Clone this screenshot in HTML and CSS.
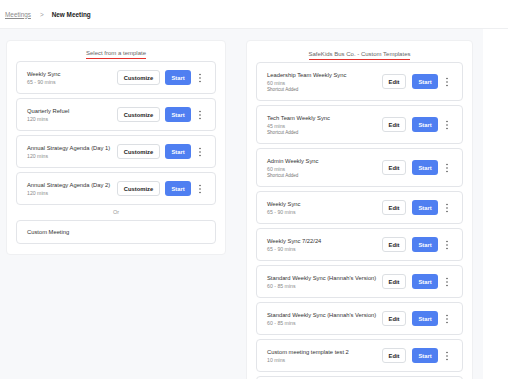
FILE: index.html
```html
<!DOCTYPE html>
<html lang="en">
<head>
  <meta charset="UTF-8">
  <meta name="viewport" content="width=device-width, initial-scale=1.0">
  <title>New Meeting</title>
  <link rel="stylesheet" href="styles.css">
</head>
<body>
  <header class="topbar">
    <a href="#" class="crumb">Meetings</a>
    <span class="crumb-sep">&gt;</span>
    <span class="crumb-current">New Meeting</span>
  </header>

  <main class="main">
    <!-- Templates padrão -->
    <section class="card card-left">
      <div class="card-title"><span>Select from a template</span></div>
      <div class="lista">
        <div class="item">
          <div class="info">
            <div class="nome">Weekly Sync</div>
            <div class="dur">65 - 90 mins</div>
          </div>
          <button class="btn btn-sec btn-customize">Customize</button>
          <button class="btn btn-start">Start</button>
          <svg class="dots" width="4" height="10" viewBox="0 0 4 10"><circle cx="2" cy="1.6" r="0.75"/><circle cx="2" cy="5" r="0.75"/><circle cx="2" cy="8.4" r="0.75"/></svg>
        </div>
        <div class="item">
          <div class="info">
            <div class="nome">Quarterly Refuel</div>
            <div class="dur">120 mins</div>
          </div>
          <button class="btn btn-sec btn-customize">Customize</button>
          <button class="btn btn-start">Start</button>
          <svg class="dots" width="4" height="10" viewBox="0 0 4 10"><circle cx="2" cy="1.6" r="0.75"/><circle cx="2" cy="5" r="0.75"/><circle cx="2" cy="8.4" r="0.75"/></svg>
        </div>
        <div class="item">
          <div class="info">
            <div class="nome">Annual Strategy Agenda (Day 1)</div>
            <div class="dur">120 mins</div>
          </div>
          <button class="btn btn-sec btn-customize">Customize</button>
          <button class="btn btn-start">Start</button>
          <svg class="dots" width="4" height="10" viewBox="0 0 4 10"><circle cx="2" cy="1.6" r="0.75"/><circle cx="2" cy="5" r="0.75"/><circle cx="2" cy="8.4" r="0.75"/></svg>
        </div>
        <div class="item">
          <div class="info">
            <div class="nome">Annual Strategy Agenda (Day 2)</div>
            <div class="dur">120 mins</div>
          </div>
          <button class="btn btn-sec btn-customize">Customize</button>
          <button class="btn btn-start">Start</button>
          <svg class="dots" width="4" height="10" viewBox="0 0 4 10"><circle cx="2" cy="1.6" r="0.75"/><circle cx="2" cy="5" r="0.75"/><circle cx="2" cy="8.4" r="0.75"/></svg>
        </div>
      </div>
      <div class="ou">Or</div>
      <div class="item item-custom">
        <div class="nome">Custom Meeting</div>
      </div>
    </section>

    <!-- Templates da empresa -->
    <section class="card card-right">
      <div class="card-title"><span>SafeKids Bus Co. - Custom Templates</span></div>
      <div class="lista">
        <div class="item">
          <div class="info">
            <div class="nome">Leadership Team Weekly Sync</div>
            <div class="dur">60 mins</div>
            <div class="atalho">Shortcut Added</div>
          </div>
          <button class="btn btn-sec btn-edit">Edit</button>
          <button class="btn btn-start">Start</button>
          <svg class="dots" width="4" height="10" viewBox="0 0 4 10"><circle cx="2" cy="1.6" r="0.75"/><circle cx="2" cy="5" r="0.75"/><circle cx="2" cy="8.4" r="0.75"/></svg>
        </div>
        <div class="item">
          <div class="info">
            <div class="nome">Tech Team Weekly Sync</div>
            <div class="dur">45 mins</div>
            <div class="atalho">Shortcut Added</div>
          </div>
          <button class="btn btn-sec btn-edit">Edit</button>
          <button class="btn btn-start">Start</button>
          <svg class="dots" width="4" height="10" viewBox="0 0 4 10"><circle cx="2" cy="1.6" r="0.75"/><circle cx="2" cy="5" r="0.75"/><circle cx="2" cy="8.4" r="0.75"/></svg>
        </div>
        <div class="item">
          <div class="info">
            <div class="nome">Admin Weekly Sync</div>
            <div class="dur">60 mins</div>
            <div class="atalho">Shortcut Added</div>
          </div>
          <button class="btn btn-sec btn-edit">Edit</button>
          <button class="btn btn-start">Start</button>
          <svg class="dots" width="4" height="10" viewBox="0 0 4 10"><circle cx="2" cy="1.6" r="0.75"/><circle cx="2" cy="5" r="0.75"/><circle cx="2" cy="8.4" r="0.75"/></svg>
        </div>
        <div class="item">
          <div class="info">
            <div class="nome">Weekly Sync</div>
            <div class="dur">65 - 90 mins</div>
          </div>
          <button class="btn btn-sec btn-edit">Edit</button>
          <button class="btn btn-start">Start</button>
          <svg class="dots" width="4" height="10" viewBox="0 0 4 10"><circle cx="2" cy="1.6" r="0.75"/><circle cx="2" cy="5" r="0.75"/><circle cx="2" cy="8.4" r="0.75"/></svg>
        </div>
        <div class="item">
          <div class="info">
            <div class="nome">Weekly Sync 7/22/24</div>
            <div class="dur">65 - 90 mins</div>
          </div>
          <button class="btn btn-sec btn-edit">Edit</button>
          <button class="btn btn-start">Start</button>
          <svg class="dots" width="4" height="10" viewBox="0 0 4 10"><circle cx="2" cy="1.6" r="0.75"/><circle cx="2" cy="5" r="0.75"/><circle cx="2" cy="8.4" r="0.75"/></svg>
        </div>
        <div class="item">
          <div class="info">
            <div class="nome">Standard Weekly Sync (Hannah's Version)</div>
            <div class="dur">60 - 85 mins</div>
          </div>
          <button class="btn btn-sec btn-edit">Edit</button>
          <button class="btn btn-start">Start</button>
          <svg class="dots" width="4" height="10" viewBox="0 0 4 10"><circle cx="2" cy="1.6" r="0.75"/><circle cx="2" cy="5" r="0.75"/><circle cx="2" cy="8.4" r="0.75"/></svg>
        </div>
        <div class="item">
          <div class="info">
            <div class="nome">Standard Weekly Sync (Hannah's Version)</div>
            <div class="dur">60 - 85 mins</div>
          </div>
          <button class="btn btn-sec btn-edit">Edit</button>
          <button class="btn btn-start">Start</button>
          <svg class="dots" width="4" height="10" viewBox="0 0 4 10"><circle cx="2" cy="1.6" r="0.75"/><circle cx="2" cy="5" r="0.75"/><circle cx="2" cy="8.4" r="0.75"/></svg>
        </div>
        <div class="item">
          <div class="info">
            <div class="nome">Custom meeting template test 2</div>
            <div class="dur">10 mins</div>
          </div>
          <button class="btn btn-sec btn-edit">Edit</button>
          <button class="btn btn-start">Start</button>
          <svg class="dots" width="4" height="10" viewBox="0 0 4 10"><circle cx="2" cy="1.6" r="0.75"/><circle cx="2" cy="5" r="0.75"/><circle cx="2" cy="8.4" r="0.75"/></svg>
        </div>
        <div class="item item-fim"></div>
      </div>
    </section>
  </main>
</body>
</html>
```

FILE: styles.css
```css
:root {
  --fundo: #f7f8fa;
  --borda: #e3e5e9;
  --azul: #4f7ff1;
  --vermelho: #e5312c;
  --texto: #333;
  --cinza: #8a8a8a;
}

html, body {
  height: 100%;
}

body {
  margin: 0;
  font-family: "Liberation Sans", Arial, sans-serif;
  color: var(--texto);
  background: #fff;
  overflow: hidden;
}

.topbar {
  height: 28px;
  border-bottom: 1px solid #eeeff1;
  display: flex;
  align-items: center;
  padding-left: 5px;
  font-size: 6.4px;
}

.crumb {
  color: #8c8c8c;
  text-decoration: underline;
}

.crumb-sep {
  color: #999;
  margin: 0 8px 0 9px;
}

.crumb-current {
  font-weight: bold;
  color: #222;
}

.main {
  width: 467px;
  min-height: 100%;
  background: var(--fundo);
  display: flex;
  align-items: flex-start;
  gap: 20px;
  padding: 11px 10px 0 6px;
}

.card {
  background: #fff;
  border-radius: 4px;
  border: 1px solid #eff0f2;
  padding: 8px 9px 10px;
}

.card-left {
  width: 200px;
}

.card-right {
  width: 207px;
  padding-top: 9px;
}

.card-title {
  text-align: center;
  font-size: 6px;
  color: #666;
  margin-bottom: 2px;
}

.card-title span {
  display: inline-block;
  line-height: 8px;
  padding-bottom: 1px;
  border-bottom: 1px solid var(--vermelho);
}

.lista {
  display: flex;
  flex-direction: column;
  gap: 4px;
}

.item {
  display: flex;
  align-items: center;
  border: 1px solid var(--borda);
  border-radius: 4px;
  padding: 7.5px 13px 7.5px 10px;
}

.item-fim {
  height: 18px;
}

.info {
  flex: 1;
  min-width: 0;
}

.nome {
  font-size: 5.8px;
  line-height: 8px;
  color: var(--texto);
  white-space: nowrap;
}

.dur {
  font-size: 5.2px;
  line-height: 8px;
  color: var(--cinza);
}

.atalho {
  font-size: 4.6px;
  line-height: 6px;
  color: #777;
}

.btn {
  height: 15px;
  border-radius: 3px;
  font-family: "Liberation Sans", Arial, sans-serif;
  font-size: 5.8px;
  font-weight: bold;
  padding: 0;
  cursor: pointer;
}

.btn-sec {
  background: #fff;
  color: #222;
  border: 1px solid #dcdfe3;
}

.btn-customize {
  width: 43px;
}

.btn-edit {
  width: 24px;
}

.btn-start {
  width: 26px;
  margin-left: 5px;
  background: var(--azul);
  color: #fff;
  border: none;
}

.card-right .btn-start {
  margin-left: 6px;
}

.dots {
  margin-left: 7px;
  fill: #444;
  flex-shrink: 0;
}

.ou {
  text-align: center;
  font-size: 5.5px;
  line-height: 8px;
  color: #999;
  margin: 3px 0 4px;
}

.item-custom {
  padding-top: 7px;
  padding-bottom: 7px;
}
```
